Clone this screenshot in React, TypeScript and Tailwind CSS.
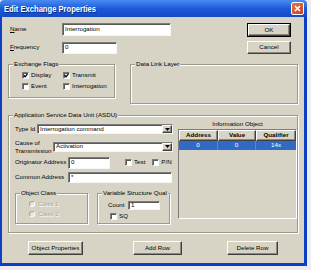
import React from "react";

type P = { className?: string; children?: React.ReactNode };

function Sunken({ className = "", children }: P) {
  return (
    <div
      className={`flex items-center bg-white border border-t-[#7c7c7c] border-l-[#7c7c7c] border-b-[#f6f6f6] border-r-[#f6f6f6] shadow-[inset_1px_1px_0_#5a5a5a] pl-[2px] whitespace-nowrap overflow-hidden ${className}`}
    >
      {children}
    </div>
  );
}

function Select({ className = "", text }: { className?: string; text: string }) {
  return (
    <div
      className={`flex items-center bg-white border border-t-[#7c7c7c] border-l-[#7c7c7c] border-b-[#f6f6f6] border-r-[#f6f6f6] shadow-[inset_1px_1px_0_#5a5a5a] pl-[2px] whitespace-nowrap overflow-hidden ${className}`}
    >
      <span className="flex-1">{text}</span>
      <div className="h-full w-[10px] flex items-center justify-center bg-[#d8d4c5] border border-t-white border-l-white border-b-[#404040] border-r-[#404040] shadow-[inset_-1px_-1px_0_#8a877c]">
        <svg width="5" height="3" viewBox="0 0 5 3">
          <path d="M0 0H5L2.5 3Z" fill="#000" />
        </svg>
      </div>
    </div>
  );
}

function Button({ className = "", children }: P) {
  return (
    <div
      className={`flex items-center justify-center bg-[#d8d4c5] border border-t-white border-l-white border-b-[#404040] border-r-[#404040] shadow-[inset_-1px_-1px_0_#8a877c] whitespace-nowrap ${className}`}
    >
      {children}
    </div>
  );
}

function Check({ checked = false, label, className = "" }: { checked?: boolean; label: string; className?: string }) {
  return (
    <div className={`flex items-center gap-[2px] ${className}`}>
      <div className="w-[7px] h-[7px] bg-white border border-t-[#7c7c7c] border-l-[#7c7c7c] border-b-[#f6f6f6] border-r-[#f6f6f6] shadow-[inset_1px_1px_0_#5a5a5a] flex items-center justify-center">
        {checked && (
          <svg width="5" height="5" viewBox="0 0 7 7">
            <path d="M1 3.2L3 5.3L6.2 1.2" stroke="#000" strokeWidth="1.8" fill="none" />
          </svg>
        )}
      </div>
      <span>{label}</span>
    </div>
  );
}

function Radio({ label }: { label: string }) {
  return (
    <div className="flex items-center gap-[3px] h-[10px]">
      <div className="w-[6px] h-[6px] rounded-full bg-[#e6e3d8] border border-t-[#a8a598] border-l-[#a8a598] border-b-white border-r-white" />
      <span className="text-[#aca899] [text-shadow:1px_1px_0_#ffffff]">{label}</span>
    </div>
  );
}

function Group({ label, className = "", children }: P & { label: string }) {
  return (
    <div className={`relative border border-[#9c998d] shadow-[inset_1px_1px_0_#ffffff,1px_1px_0_#ffffff] ${className}`}>
      <span className="absolute left-[4px] top-[-4px] px-[1px] bg-[#d8d4c5] leading-none whitespace-nowrap">{label}</span>
      {children}
    </div>
  );
}

export default function App() {
  return (
    <div className="w-[311px] h-[270px] bg-[#eeeeee] font-['Liberation_Sans',Arial,sans-serif] text-[6.2px] leading-none text-black">
      <div className="w-[307px] h-[266px] flex flex-col">
        {/* Title bar */}
        <div className="h-[17px] flex items-center bg-linear-to-b from-[#4a8cf2] via-[#1c5ad8] to-[#1549c6] rounded-t-[4px] pl-[4px] pr-[3px]">
          <span className="text-white font-bold text-[9.5px] scale-x-[0.8] origin-left whitespace-nowrap [text-shadow:1px_1px_0_#0a2a80]">
            Edit Exchange Properties
          </span>
          <div className="ml-auto w-[13px] h-[13px] rounded-[2px] border border-white bg-linear-to-br from-[#e8734d] to-[#c9401b] flex items-center justify-center">
            <svg width="7" height="7" viewBox="0 0 7 7">
              <path d="M1 1L6 6M6 1L1 6" stroke="#fff" strokeWidth="1.6" />
            </svg>
          </div>
        </div>

        {/* Body */}
        <div className="flex-1 flex flex-col bg-[#d8d4c5] border-l-[2px] border-r-[3px] border-b-[3px] border-[#0d3fc4]">
          {/* Top rows */}
          <div className="flex pt-[6px] pr-[13px]">
            <div className="flex flex-col gap-[5px] pl-[8px]">
              <div className="flex items-center h-[13px]">
                <span className="w-[52px]">
                  <span className="underline">N</span>ame
                </span>
                <Sunken className="w-[109px] h-[13px]">Interrogation</Sunken>
              </div>
              <div className="flex items-center h-[13px]">
                <span className="w-[52px]">
                  <span className="underline">F</span>requency
                </span>
                <Sunken className="w-[55px] h-[12px]">0</Sunken>
              </div>
            </div>
            <div className="ml-auto flex flex-col gap-[4px]">
              <div className="w-[44px] h-[14px] border border-black flex">
                <Button className="flex-1">OK</Button>
              </div>
              <Button className="w-[44px] h-[13px]">Cancel</Button>
            </div>
          </div>

          {/* Flags / Data link */}
          <div className="flex items-start mt-[10px] pl-[6px]">
            <Group label="Exchange Flags" className="w-[107px] h-[34px]">
              <div className="grid grid-cols-[41px_1fr] pt-[5px] pl-[13px]">
                <Check checked label="Display" className="h-[11px]" />
                <Check checked label="Transmit" className="h-[11px]" />
                <Check label="Event" className="h-[11px]" />
                <Check label="Interrogation" className="h-[11px]" />
              </div>
            </Group>
            <Group label="Data Link Layer" className="ml-[15px] w-[168px] h-[40px]" />
          </div>

          {/* ASDU */}
          <Group label="Application Service Data Unit  (ASDU)" className="mt-[11px] ml-[6px] w-[290px] h-[118px]">
            <div className="flex pt-[4px] pl-[6px]">
              <div className="w-[158px] flex flex-col pt-[4px]">
                <div className="flex items-center h-[10px]">
                  <span className="w-[22px]">Type Id</span>
                  <Select className="w-[136px] h-[10px]" text="Interrogation command" />
                </div>
                <div className="flex items-center h-[17px] mt-[4px]">
                  <span className="w-[38px] leading-[8px] whitespace-nowrap">
                    Cause of
                    <br />
                    Transmission
                  </span>
                  <Select className="w-[120px] h-[10px]" text="Activation" />
                </div>
                <div className="flex items-center h-[13px] mt-[1px]">
                  <span className="w-[53px] whitespace-nowrap">Originator Address</span>
                  <Sunken className="w-[42px] h-[12px]">0</Sunken>
                  <Check label="Test" className="ml-[15px]" />
                  <Check label="P/N" className="ml-[7px]" />
                </div>
                <div className="flex items-center h-[11px] mt-[3px]">
                  <span className="w-[53px] whitespace-nowrap">Common Address</span>
                  <Sunken className="w-[104px] h-[11px]">*</Sunken>
                </div>
                <div className="flex mt-[10px]">
                  <Group label="Object Class" className="w-[73px] h-[31px]">
                    <div className="flex flex-col pt-[5px] pl-[13px]">
                      <Radio label="Class 1" />
                      <Radio label="Class 2" />
                    </div>
                  </Group>
                  <Group label="Variable Structure Qual" className="ml-[9px] w-[73px] h-[31px]">
                    <div className="flex flex-col pt-[6px] pl-[10px]">
                      <div className="flex items-center h-[10px]">
                        <span className="w-[20px]">Count</span>
                        <Sunken className="w-[32px] h-[9px]">1</Sunken>
                      </div>
                      <Check label="SQ" className="mt-[2px] ml-[2px] h-[9px]" />
                    </div>
                  </Group>
                </div>
              </div>

              <div className="ml-[5px] w-[119px] flex flex-col">
                <div className="h-[9px] flex items-center justify-center">Information Object</div>
                <div className="h-[90px] border border-t-[#7c7c7c] border-l-[#7c7c7c] border-b-white border-r-white bg-[#d8d4c5]">
                  <div className="flex h-[11px] font-bold">
                    <Button className="w-[39px] h-full">Address</Button>
                    <Button className="w-[38px] h-full">Value</Button>
                    <Button className="flex-1 h-full">Qualifier</Button>
                  </div>
                  <div className="flex h-[9px] bg-[#316ac5] text-white">
                    <div className="w-[39px] flex items-center justify-center border-r border-[#5a86d0]">0</div>
                    <div className="w-[38px] flex items-center justify-center border-r border-[#5a86d0]">0</div>
                    <div className="flex-1 flex items-center justify-center">14x</div>
                  </div>
                </div>
              </div>
            </div>
          </Group>

          {/* Bottom buttons */}
          <div className="flex mt-[8px]">
            <Button className="ml-[26px] w-[55px] h-[14px]">Object Properties</Button>
            <Button className="ml-[50px] w-[49px] h-[14px]">Add Row</Button>
            <Button className="ml-[45px] w-[51px] h-[14px]">Delete Row</Button>
          </div>
        </div>
      </div>
    </div>
  );
}
